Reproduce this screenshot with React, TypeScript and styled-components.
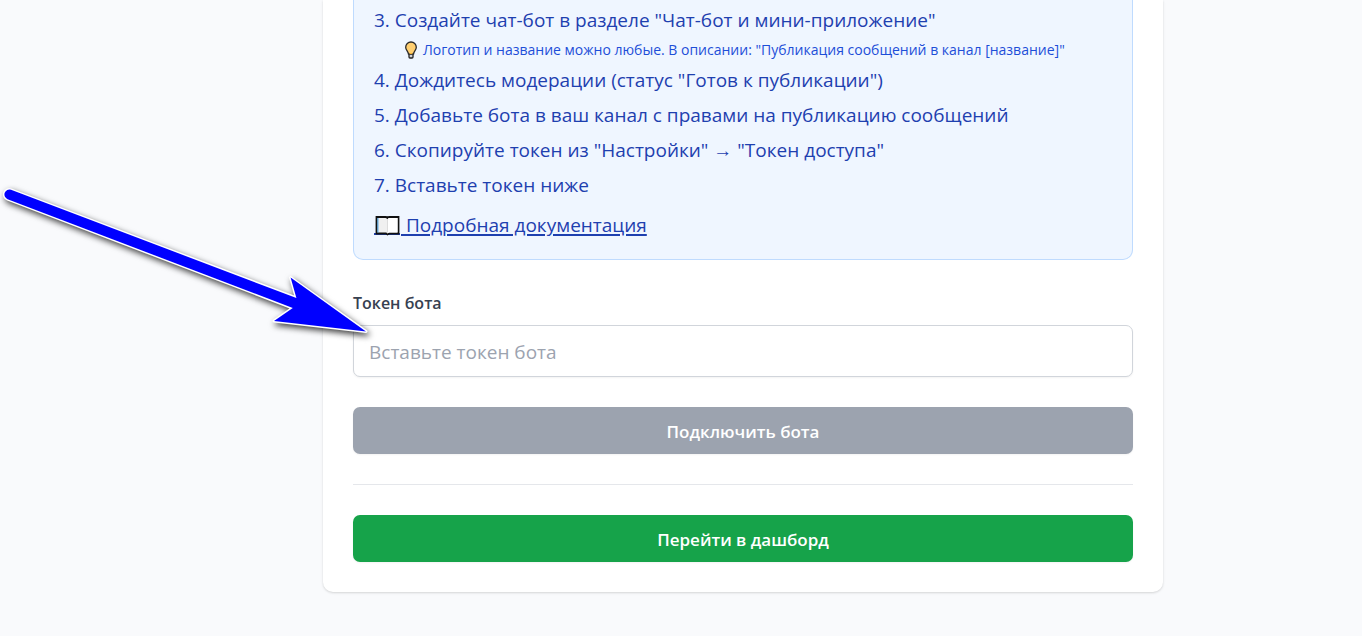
import React from "react";
import styled, { createGlobalStyle } from "styled-components";

const GlobalStyle = createGlobalStyle`
  *, *::before, *::after { box-sizing: border-box; }
  body {
    margin: 0;
    background: #f9fafb;
    font-family: "Segoe UI", "Open Sans", "Noto Sans", sans-serif;
  }
`;

const Page = styled.main`
  position: relative;
  min-height: 100vh;
  padding: 0 0 40px 124px;
  background: #f9fafc;
`;

const Card = styled.section`
  max-width: 840px;
  margin: 0 auto;
  padding: 0 30px 30px;
  background: #ffffff;
  border-radius: 0 0 10px 10px;
  box-shadow: 0 1px 3px rgba(0, 0, 0, 0.1), 0 1px 2px rgba(0, 0, 0, 0.06);
`;

const Instructions = styled.div`
  padding: 5px 20px 19px;
  background: #eff6ff;
  border: 1px solid #bfdbfe;
  border-top: none;
  border-radius: 0 0 10px 10px;
  color: #1e40af;
  font-size: 19px;
  line-height: 30px;
`;

const Steps = styled.ol`
  display: flex;
  flex-direction: column;
  gap: 5px;
  margin: 0 0 10px;
  padding: 0;
  list-style: none;
`;

const Hint = styled.p`
  display: flex;
  align-items: center;
  gap: 5px;
  margin: 5px 0 0 30px;
  color: #1d4ed8;
  font-size: 14px;
  line-height: 20px;
`;

const DocLink = styled.a`
  display: block;
  width: fit-content;
  color: #1e40af;
  text-decoration: underline;
  text-decoration-thickness: 2px;
  text-underline-offset: 2px;
`;

const Form = styled.form`
  display: flex;
  flex-direction: column;
  margin: 30px 0;
  padding-bottom: 30px;
  border-bottom: 1px solid #e5e7eb;
`;

const Label = styled.label`
  margin-bottom: 8px;
  color: #374151;
  font-size: 16px;
  font-weight: 600;
  line-height: 27px;
`;

const TokenInput = styled.input`
  width: 100%;
  height: 52px;
  margin-bottom: 30px;
  padding: 2px 15px 0;
  background: #ffffff;
  border: 1px solid #d1d5db;
  border-radius: 7px;
  box-shadow: 0 1px 2px rgba(0, 0, 0, 0.05);
  color: #111827;
  font-family: inherit;
  font-size: 19px;

  &::placeholder { color: #9ca3af; opacity: 1; }
`;

const Button = styled.button<{ $tone: string }>`
  display: block;
  width: 100%;
  height: 47px;
  padding: 2px 20px 0;
  border: none;
  border-radius: 7px;
  background: ${(p) => p.$tone};
  box-shadow: 0 1px 2px rgba(0, 0, 0, 0.05);
  color: #ffffff;
  font-family: inherit;
  font-size: 17px;
  font-weight: 600;
`;

const Pointer = styled.svg`
  position: absolute;
  top: 180px;
  left: 0;
  pointer-events: none;
  overflow: visible;
  filter: drop-shadow(2px 3px 3px rgba(0, 0, 0, 0.75));
`;

const BookSvg = styled.svg`
  margin-right: 1px;
  vertical-align: -4px;
`;

const Bulb = () => (
  <svg width="14" height="20" viewBox="0 0 14 20" aria-hidden="true">
    <path d="M5 13.5h4V17a1 1 0 0 1-1 1H6a1 1 0 0 1-1-1z" fill="#d4d4d4" stroke="#222" strokeWidth="1.3" />
    <path d="M7 2a5.3 5.3 0 0 0-5.3 5.3c0 2.9 2.4 3.6 2.8 6.9h5c.4-3.3 2.8-4 2.8-6.9A5.3 5.3 0 0 0 7 2z" fill="#ffcf70" stroke="#292929" strokeWidth="1.3" />
    <path d="M6 13.5h2" stroke="#f5b32f" strokeWidth="1.2" />
  </svg>
);

const Book = () => (
  <BookSvg width="26" height="21" viewBox="0 0 26 21" aria-hidden="true">
    <path d="M0 19h26" stroke="#1e40af" strokeWidth="2" />
    <path d="M2.5 2h9q1.5 0 2 1 .5-1 2-1h9v16.5H15l-1.5 1-1.5-1H2.5z" fill="#f0f0f0" stroke="#111" strokeWidth="1.8" />
    <path d="M3.9 3v14.6" stroke="#3b96d9" strokeWidth="1" />
    <path d="M13.5 4q.8-1 2-1h8v14.5H15l-1.5 1z" fill="#ffffff" />
    <path d="M13.5 4v13.6" stroke="#dcdcdc" strokeWidth="1" />
  </BookSvg>
);

const ArrowPointer = () => (
  <Pointer width="380" height="165" viewBox="0 180 380 165" aria-hidden="true">
    <path
      d="M11 189.8 L296.4 298 L290.6 277.6 L366 331.4 L274 321 L292.8 308 L7.6 199.2 A5 5 0 0 1 11 189.8 Z"
      fill="#0000ff"
      stroke="#ffffff"
      strokeWidth="3"
      strokeLinejoin="round"
      paintOrder="stroke"
    />
  </Pointer>
);

export default function App() {
  return (
    <>
      <GlobalStyle />
      <Page>
        <Card>
          <Instructions>
            <Steps>
              <li>
                3. Создайте чат-бот в разделе "Чат-бот и мини-приложение"
                <Hint>
                  <Bulb />
                  Логотип и название можно любые. В описании: "Публикация сообщений в канал [название]"
                </Hint>
              </li>
              <li>4. Дождитесь модерации (статус "Готов к публикации")</li>
              <li>5. Добавьте бота в ваш канал с правами на публикацию сообщений</li>
              <li>6. Скопируйте токен из "Настройки" → "Токен доступа"</li>
              <li>7. Вставьте токен ниже</li>
            </Steps>
            <DocLink href="#docs">
              <Book /> Подробная документация
            </DocLink>
          </Instructions>
          <Form onSubmit={(e) => e.preventDefault()}>
            <Label htmlFor="token">Токен бота</Label>
            <TokenInput id="token" type="text" placeholder="Вставьте токен бота" />
            <Button type="submit" $tone="#9ca3af">Подключить бота</Button>
          </Form>
          <Button type="button" $tone="#16a34a">Перейти в дашборд</Button>
        </Card>
        <ArrowPointer />
      </Page>
    </>
  );
}
